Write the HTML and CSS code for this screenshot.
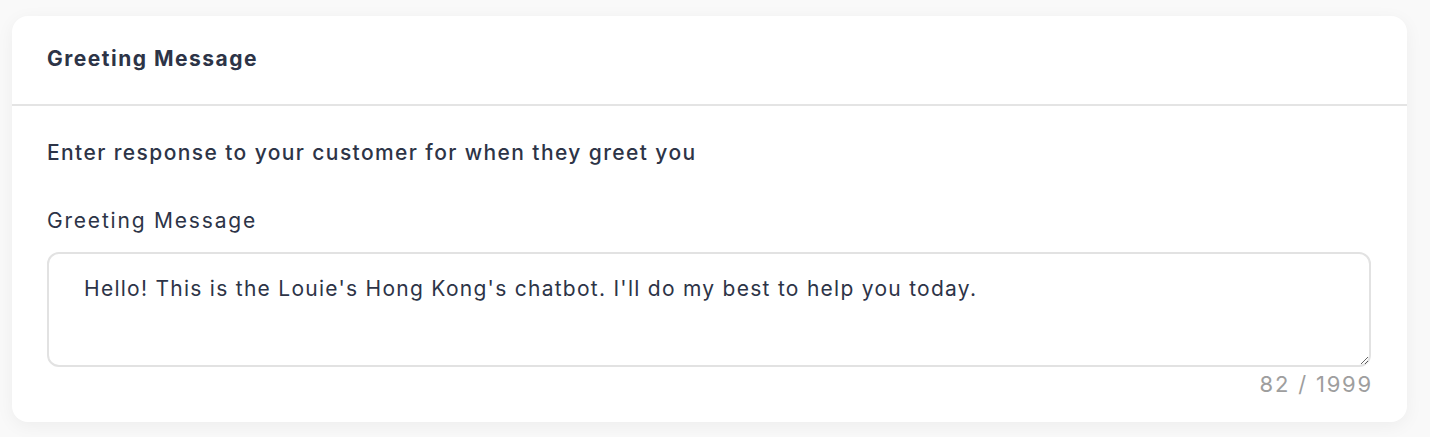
FILE: index.html
```html
<!DOCTYPE html>
<html>
<head>
<meta charset="utf-8">
<link rel="stylesheet" href="styles.css">
</head>
<body>
<div class="page">
  <section class="card">
    <header class="card-header">
      <h2 class="card-title">Greeting Message</h2>
    </header>
    <div class="card-body">
      <p class="intro">Enter response to your customer for when they greet you</p>
      <label class="field-label" for="greet">Greeting Message</label>
      <textarea id="greet" class="field-input">Hello! This is the Louie's Hong Kong's chatbot. I'll do my best to help you today.</textarea>
      <div class="counter">82 / 1999</div>
    </div>
  </section>
</div>
</body>
</html>
```
FILE: styles.css
```css
html, body {
  margin: 0;
  padding: 0;
  background: #f9f9f9;
}
.page {
  padding: 16px 23px 15px 12px;
  font-family: "Inter", "Noto Sans", sans-serif;
  color: #2d3447;
}
.card {
  background: #fff;
  border-radius: 16px;
  box-shadow: 0 4px 18px rgba(0, 0, 0, 0.05);
  height: 406px;
  box-sizing: border-box;
}
.card-header {
  height: 90px;
  box-sizing: border-box;
  border-bottom: 2px solid #e4e4e4;
  padding: 29px 35px 0;
}
.card-title {
  margin: 0;
  font-size: 21px;
  line-height: 28px;
  font-weight: 700;
  letter-spacing: 1.5px;
}
.card-body {
  padding: 33px 36px 0 35px;
  display: flex;
  flex-direction: column;
}
.intro {
  margin: 0;
  font-size: 21px;
  line-height: 28px;
  font-weight: 500;
  letter-spacing: 1.4px;
}
.field-label {
  margin-top: 40px;
  font-size: 21px;
  line-height: 28px;
  font-weight: 400;
  letter-spacing: 1.8px;
}
.field-input {
  margin-top: 17px;
  height: 115px;
  box-sizing: border-box;
  border: 2px solid #e2e2e2;
  border-radius: 12px;
  padding: 21px 35px;
  font-family: inherit;
  font-size: 21px;
  font-weight: 400;
  letter-spacing: 1.27px;
  color: #2d3447;
  line-height: 28px;
  resize: vertical;
  outline: none;
}
.counter {
  align-self: flex-end;
  margin-top: 3px;
  margin-right: -2px;
  font-size: 22px;
  line-height: 28px;
  letter-spacing: 1.8px;
  color: #9e9e9e;
}
```
